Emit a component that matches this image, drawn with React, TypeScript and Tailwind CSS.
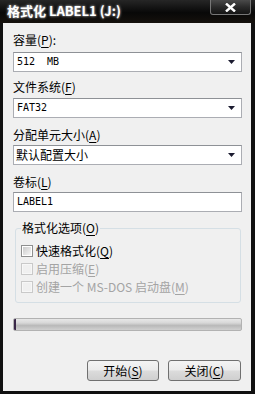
import React from "react";

const cjk = "font-['Noto_Sans_CJK_SC','Noto_Sans',sans-serif]";
const mono = "font-['DejaVu_Sans_Mono','Liberation_Mono',monospace]";

function Label({ text, k, tail = ")", className = "" }: { text: string; k: string; tail?: string; className?: string }) {
  return (
    <div className={`h-[16px] leading-[16px] text-[12px] text-black ${cjk} ${className}`}>
      {text}(<span className="underline underline-offset-2">{k}</span>{tail}
    </div>
  );
}

function Arrow() {
  return (
    <svg width="7" height="4" viewBox="0 0 7 4" className="ml-auto">
      <path d="M0 0 H7 L3.5 4 Z" fill="#1b1b30" />
    </svg>
  );
}

function Select({ children, className = "" }: { children: React.ReactNode; className?: string }) {
  return (
    <div className={`flex h-[20px] items-center border border-[#abadb3] border-t-[#8e9196] bg-white pl-[2px] pr-[6px] ${className}`}>
      {children}
      <Arrow />
    </div>
  );
}

function Check({ disabled, children }: { disabled?: boolean; children: React.ReactNode }) {
  return (
    <div className="flex h-[18px] items-center">
      <div
        className={`h-[12px] w-[12px] p-[1px] border ${
          disabled ? "border-[#c9c9c9] bg-[#f7f7f7]" : "border-[#8e8f8f] bg-white"
        }`}
      >
        <div
          className={`h-full w-full ${
            disabled
              ? "bg-[#f0f0f0]"
              : "bg-[linear-gradient(135deg,#cbcbcb,#e9e9e9_70%,#f6f6f6)]"
          }`}
        />
      </div>
      <div
        className={`ml-[3px] text-[12px] leading-[16px] ${cjk} ${
          disabled ? "text-[#a4a4a4]" : "text-black"
        }`}
      >
        {children}
      </div>
    </div>
  );
}

function Button({ text, k }: { text: string; k: string }) {
  return (
    <div
      className={`flex h-[21px] items-center justify-center rounded-[3px] border border-[#707070] bg-[linear-gradient(to_bottom,#f4f4f4,#ebebeb_48%,#dcdcdc_52%,#cfcfcf)] text-[12px] leading-[16px] text-black ${cjk}`}
      style={{ width: k === "S" ? 72 : 73 }}
    >
      {text}(<span className="underline underline-offset-2">{k}</span>)
    </div>
  );
}

export default function App() {
  return (
    <div className="flex h-[394px] w-[255px] flex-col bg-black">
      {/* Title bar */}
      <div className="flex h-[23px] items-start bg-[linear-gradient(to_bottom,#262626,#080808_55%,#15110d)]">
        <div
          className={`pl-[7px] pt-[3px] text-[13px] font-bold leading-[16px] text-white ${cjk} [text-shadow:0_0_3px_rgba(170,170,170,1),0_0_2px_rgba(120,120,120,1)]`}
        >
          格式化 LABEL1 (J:)
        </div>
        <div className="ml-auto mr-[4px] flex h-[15px] w-[41px] items-center justify-center rounded-b-[3px] border border-t-0 border-[#777777] bg-[linear-gradient(to_bottom,#4a4a4a,#2a2a2a_50%,#141414)]">
          <svg width="11" height="9" viewBox="0 0 11 9">
            <path d="M1 0.5 L10 8.5 M10 0.5 L1 8.5" stroke="#ffffff" strokeWidth="2.4" />
          </svg>
        </div>
      </div>

      {/* Body */}
      <div className="flex flex-1 flex-col border-b-[3px] border-l-[3px] border-r-[4px] border-[#101010] bg-[#f0f0f0] pl-[10px] pr-[9px] pt-[9px]">
        <Label text="容量" k="P" tail="):" />
        <Select className="mt-[4px]">
          <span className={`text-[10px] leading-[12px] text-black ${mono} pl-[1px]`}>512&nbsp;&nbsp;MB</span>
        </Select>

        <Label text="文件系统" k="F" className="mt-[7px]" />
        <Select className="mt-[3px]">
          <span className={`text-[10px] leading-[12px] text-black ${mono} pl-[1px]`}>FAT32</span>
        </Select>

        <Label text="分配单元大小" k="A" className="mt-[9px]" />
        <Select className="mt-[2px]">
          <span className={`text-[12px] leading-[16px] text-black ${cjk}`}>默认配置大小</span>
        </Select>

        <Label text="卷标" k="L" className="mt-[9px]" />
        <div className="mt-[2px] flex h-[20px] items-center border border-[#abadb3] border-t-[#8e9196] bg-white pl-[3px]">
          <span className={`text-[10px] leading-[12px] text-black ${mono}`}>LABEL1</span>
        </div>

        <fieldset className="ml-[2px] mr-[1px] mt-[8px] rounded-[3px] border border-[#d5dfe5] px-[5px] pb-[6px]">
          <legend className={`px-[1px] text-[12px] leading-[16px] text-black ${cjk}`}>
            格式化选项(<span className="underline underline-offset-2">O</span>)
          </legend>
          <div className="pt-[6px]">
            <Check>
              快速格式化(<span className="underline underline-offset-2">Q</span>)
            </Check>
            <Check disabled>
              启用压缩(<span className="underline underline-offset-2">E</span>)
            </Check>
            <Check disabled>
              创建一个 MS-DOS 启动盘(<span className="underline underline-offset-2">M</span>)
            </Check>
          </div>
        </fieldset>

        <div className="mt-[15px] flex h-[13px] overflow-hidden rounded-[2px] border border-[#b2b2b2] bg-[linear-gradient(to_bottom,#e8e8e8,#d8d8d8_35%,#b9b9b9_60%,#d0d0d0)]">
          <div className="w-[2px] bg-[#3a2848]" />
        </div>

        <div className="mr-[1px] mt-[29px] flex justify-end gap-[9px]">
          <Button text="开始" k="S" />
          <Button text="关闭" k="C" />
        </div>
      </div>
    </div>
  );
}
